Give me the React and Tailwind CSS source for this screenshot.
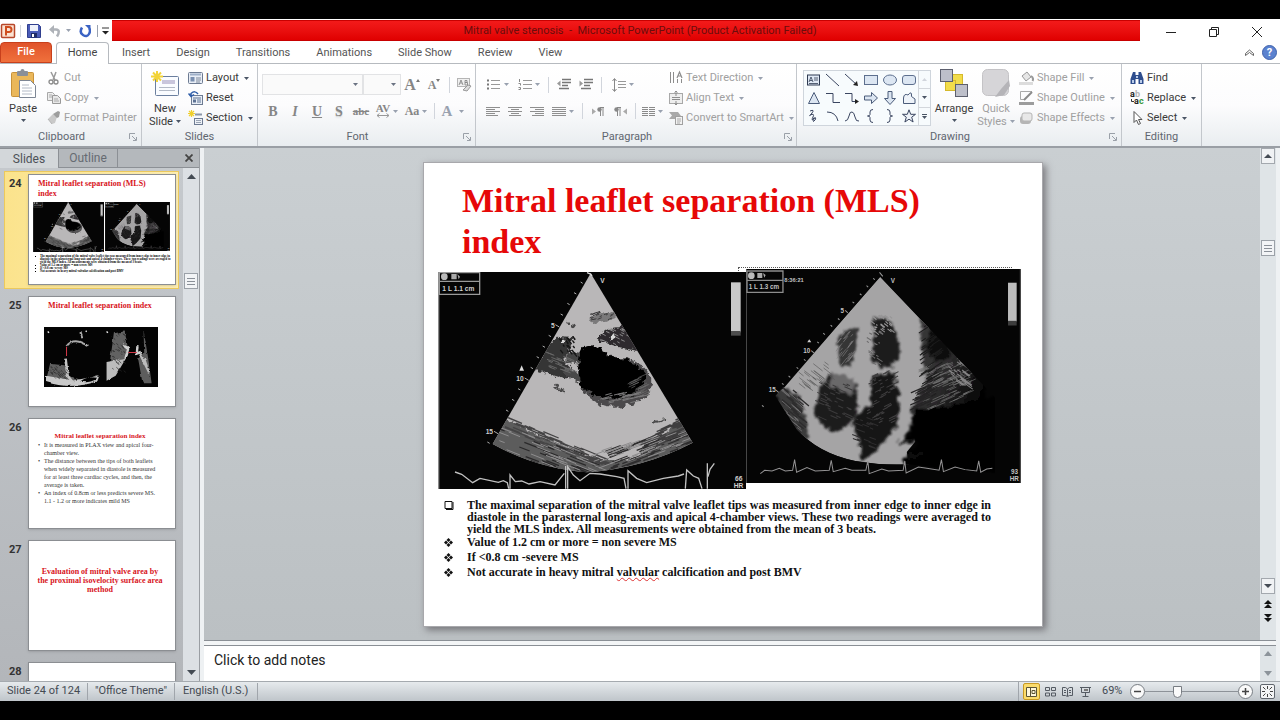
import { useId } from "react";

const UI = "font-['Roboto',sans-serif]";
const SERIF = "font-['Liberation_Serif',serif]";

// small deterministic generator, keeps the speckle the same on every render
function streaks(seed, count, x, y, w, h, dx, dy, slope = 0) {
  let s = seed;
  const next = () => {
    s = (s * 16807) % 2147483647;
    return s / 2147483647;
  };
  let d = "";
  for (let i = 0; i < count; i++) {
    const k = 0.4 + next();
    const px = next() * w;
    d += `M${Math.round(x + px)} ${Math.round(y + next() * h + px * slope)}l${Math.round(dx * k)} ${Math.round(dy * k)}`;
  }
  return d;
}

function Rough({ id, scale = 16, soft = 2 }) {
  return (
    <filter id={id} x="-10%" y="-10%" width="120%" height="120%">
      <feTurbulence type="fractalNoise" baseFrequency="0.06" numOctaves="3" seed="4" />
      <feDisplacementMap in="SourceGraphic" scale={scale} xChannelSelector="R" yChannelSelector="G" />
      <feGaussianBlur stdDeviation={soft} />
    </filter>
  );
}

function LongAxisScan({ className }) {
  const id = useId();
  const wedge = "M482 40L788 548Q640 625 470 637Q320 625 188 552Z";
  return (
    <svg viewBox="24 36 924 651" preserveAspectRatio="none" className={className} role="img" aria-label="Parasternal long-axis view">
      <defs>
        <Rough id={`${id}r`} scale={24} />
        <clipPath id={`${id}c`}>
          <path d={wedge} />
        </clipPath>
      </defs>
      <rect x="24" y="36" width="924" height="651" fill="#050505" />
      <path d="M26 36V687" stroke="#8a8a8a" strokeWidth="4" />
      <path d={wedge} fill="#b9b7b8" />
      <g clipPath={`url(#${id}c)`}>
        <g filter={`url(#${id}r)`}>
          <path d="M215 475L260 488L320 525L400 562L480 592L560 604L620 594L680 540L760 480L830 560L470 680L160 580Z" fill="#5c5b5c" />
          <path d="M380 230L434 235L415 270L400 300L448 355L400 355L300 325Z" fill="#363536" />
          <path d="M408 272L450 278L458 315L410 308Z" fill="#454445" />
          <path d="M400 325L455 338L450 366L420 358Z" fill="#4a494a" />
          <path d="M500 238Q520 202 580 200L640 275Q570 268 500 238Z" fill="#2d2c2d" />
          <path d="M474 172L550 152L566 170L525 186L484 190Z" fill="#7a797a" />
          <path d="M412 188l26 12M370 376l36 18M664 490l44-12" stroke="#4a494a" strokeWidth="6" />
          <path d="M446 294Q450 258 486 256Q516 260 536 290Q615 288 652 332Q678 364 646 412Q606 444 540 440Q482 430 454 384Q438 336 446 294Z" fill="#4b4a4b" />
          <path d="M448 292Q452 258 488 256Q514 262 536 292Q606 294 640 332Q658 370 622 394Q576 424 520 414Q476 406 454 376Q442 334 448 292Z" fill="#060606" />
          <path d="M540 234l16-5M396 240l10 6" stroke="#d8d8d8" strokeWidth="11" />
        </g>
        <g fill="none">
          <path d={streaks(11, 60, 200, 500, 290, 130, 46, 18, 0.3)} stroke="#2b2a2b" strokeWidth="4" />
          <path d={streaks(71, 60, 215, 462, 290, 40, 44, 18, 0.42)} stroke="#454445" strokeWidth="4" />
          <path d={streaks(23, 55, 200, 490, 300, 130, 40, 16, 0.3)} stroke="#8e8d8e" strokeWidth="3" />
          <path d={streaks(37, 60, 500, 580, 270, 60, 42, -16, -0.25)} stroke="#2f2e2f" strokeWidth="4" />
          <path d={streaks(83, 50, 620, 550, 130, 50, 34, -16, -0.6)} stroke="#3f3e3f" strokeWidth="4" />
          <path d={streaks(51, 45, 480, 580, 280, 60, 40, -15, -0.25)} stroke="#8e8d8e" strokeWidth="3" />
          <path d={streaks(7, 24, 590, 350, 50, 60, 26, -12)} stroke="#6d6c6d" strokeWidth="2" />
          <path d={streaks(93, 24, 510, 400, 120, 30, 24, -6)} stroke="#7b7a7b" strokeWidth="3" />
          <path d={streaks(9, 26, 340, 270, 80, 60, 26, 10)} stroke="#666" strokeWidth="3" />
          <path d={streaks(97, 20, 475, 158, 70, 24, 12, -5)} stroke="#3f3e3f" strokeWidth="3" />
          <path d={streaks(101, 22, 510, 200, 80, 50, 12, 6)} stroke="#8b8a8b" strokeWidth="3" />
          <path d={streaks(103, 20, 385, 230, 50, 50, 8, 10)} stroke="#151515" strokeWidth="4" />
        </g>
      </g>
      <path d="M452 66l6 4M432 98l7 4M412 130l7 4M392 162l7 4M376 194l12 7M356 226l7 4M338 258l7 4M320 290l7 4M302 322l7 4M284 354l12 7M264 386l7 4M246 418l7 4M228 450l7 4M192 514l12 7M172 546l7 4" stroke="#b0b0b0" strokeWidth="3" />
      <path d="M471 38l11 4 4 6" stroke="#ddd" strokeWidth="4" fill="none" />
      <path d="M275 316l7 16h-14z" fill="#ddd" />
      <g fill="#d0d0d0" fontFamily="Liberation Sans, sans-serif" fontWeight="bold" fontSize="20">
        <text x="511" y="69">V</text>
        <text x="363" y="203">5</text>
        <text x="259" y="363">10</text>
        <text x="167" y="522">15</text>
        <text x="915" y="664">66</text>
        <text x="911" y="685">HR</text>
        <text x="37" y="93">1 L 1.1 cm</text>
      </g>
      <path d="M28 38H149V103H28ZM28 64H149" fill="none" stroke="#9a9a9a" strokeWidth="4" />
      <circle cx="43" cy="50" r="10" fill="#bbb" />
      <path d="M64 42h16v16h-16zM82 42l8 8-4 8" fill="#aaa" />
      <rect x="903" y="67" width="29" height="150" fill="#c9c9c9" />
      <rect x="903" y="213" width="29" height="14" fill="#4d4d4d" />
      <path d="M75 636L95 643L128 668L150 655L205 667L220 662L232 668L236 686M240 686V645L256 665L275 663L297 672L330 665L375 675L395 650L403 640M407 686V618M413 686V620L430 645L450 662L480 640L510 642L560 650L582 655L588 686M594 686V632L620 655L650 668L700 655L745 648L762 642M766 686L770 630L790 648L806 655L816 686M832 686V610M834 650L840 628L853 610" fill="none" stroke="#c2c2c2" strokeWidth="4" />
    </svg>
  );
}

function FourChamberScan({ className }) {
  const id = useId();
  return (
    <svg viewBox="32 28 826 640" preserveAspectRatio="none" className={className} role="img" aria-label="Apical 4-chamber view">
      <defs>
        <Rough id={`${id}r`} scale={28} soft={3} />
        <linearGradient id={`${id}g`} x1="0" y1="0" x2="1" y2="0.6">
          <stop offset="0" stopColor="#3c3b3c" />
          <stop offset="0.55" stopColor="#2e2d2e" />
          <stop offset="1" stopColor="#050505" />
        </linearGradient>
        <clipPath id={`${id}c`}>
          <path d="M435 52L780 412V640L520 612Q440 616 360 602Q250 580 185 508L120 408Z" />
        </clipPath>
      </defs>
      <rect x="32" y="28" width="826" height="640" fill="#050505" />
      <path d="M33 28V668M856 28V668" stroke="#555" strokeWidth="3" />
      <g clipPath={`url(#${id}c)`}>
        <path d="M435 50L582 204L600 420L540 470L540 545L515 575L522 612Q440 616 360 602Q250 580 185 508L136 395Z" fill="#a5a4a5" />
        <g filter={`url(#${id}r)`}>
          <path d="M556 165L650 240L760 360L740 440L640 490L520 460L575 370L562 290Z" fill={`url(#${id}g)`} />
          <path d="M585 205L645 262L650 290L600 305L572 270Z" fill="#0c0c0c" />
          <path d="M540 445L640 440L800 400L800 640L510 640L500 600L548 552L505 545L525 500Z" fill="#060606" />
          <path d="M312 220L366 204L360 300L346 315L312 318L304 240Z" fill="#353435" />
          <path d="M415 172Q460 166 482 210L494 290L474 316L436 322L408 300L416 230Z" fill="#1d1c1d" />
          <path d="M414 346L474 336L492 400L484 500L434 560L382 606L372 540L350 505L360 462L406 440Z" fill="#151415" />
          <path d="M280 345Q334 335 362 370L368 440L342 495L296 516Q246 494 238 444L256 386Z" fill="#1b1a1b" />
          <path d="M286 344Q334 332 360 368L354 405L284 376Z" fill="#6a696a" />
          <path d="M110 380L185 400L210 460L220 540L160 520Z" fill="#3b3a3b" />
          <path d="M488 552l45-12M520 590l40-10" stroke="#101010" strokeWidth="10" />
        </g>
        <g fill="none">
          <path d={streaks(3, 90, 550, 330, 140, 130, 32, -14, -0.3)} stroke="#767576" strokeWidth="2" />
          <path d={streaks(107, 30, 640, 285, 60, 80, 22, 16, 0.4)} stroke="#858485" strokeWidth="3" />
          <path d={streaks(5, 50, 550, 180, 50, 240, 24, -16)} stroke="#1c1c1c" strokeWidth="3" />
          <path d={streaks(109, 40, 520, 400, 60, 60, 28, -12, -0.4)} stroke="#252425" strokeWidth="3" />
          <path d={streaks(13, 26, 310, 205, 50, 90, -14, 18)} stroke="#7e7d7e" strokeWidth="2" />
          <path d={streaks(17, 34, 405, 165, 60, 50, 10, 8)} stroke="#959495" strokeWidth="3" />
          <path d={streaks(113, 24, 395, 210, 40, 100, 10, 6)} stroke="#6c6b6c" strokeWidth="3" />
          <path d={streaks(19, 50, 395, 340, 75, 150, 16, -8)} stroke="#3e3d3e" strokeWidth="3" />
          <path d={streaks(29, 34, 240, 360, 100, 110, 20, 9)} stroke="#3c3b3c" strokeWidth="3" />
          <path d={streaks(127, 26, 185, 320, 100, 60, 26, 20, -0.2)} stroke="#5b5a5b" strokeWidth="2" />
          <path d={streaks(31, 34, 135, 370, 60, 130, 24, 20, 0.5)} stroke="#2d2c2d" strokeWidth="4" />
          <path d={streaks(131, 24, 130, 380, 60, 90, 24, 20, 0.6)} stroke="#7e7d7e" strokeWidth="2" />
          <path d={streaks(41, 20, 350, 460, 60, 100, 18, 7)} stroke="#2f2e2f" strokeWidth="3" />
        </g>
      </g>
      <path d="M433 38l10 12M414 56l5 4M394 78l5 4M374 102l5 4M352 126l5 4M330 152l8 7M308 176l5 4M286 196l5 4M264 220l5 4M246 246l5 4M228 272l8 7M206 298l5 4M184 322l5 4M160 348l5 4M140 370l5 4M122 390l8 7M80 436l5 4" stroke="#999" strokeWidth="3" />
      <path d="M222 238l6 9h-12z" fill="#ccc" />
      <g fill="#c2c2c2" fontFamily="Liberation Sans, sans-serif" fontWeight="bold" fontSize="19">
        <text x="467" y="69">V</text>
        <text x="316" y="161">5</text>
        <text x="204" y="278">10</text>
        <text x="100" y="397">15</text>
        <text x="828" y="640">93</text>
        <text x="824" y="662">HR</text>
        <text x="40" y="89">1 L 1.3 cm</text>
        <text x="147" y="68" fontSize="17">8:36:21</text>
      </g>
      <path d="M35 34H143V98H35ZM35 62H143" fill="none" stroke="#8d8d8d" strokeWidth="4" />
      <circle cx="48" cy="48" r="10" fill="#bbb" />
      <path d="M66 40h15v15h-15zM83 40l8 6-4 8" fill="#aaa" />
      <rect x="819" y="69" width="26" height="116" fill="#bdbdbd" />
      <rect x="819" y="183" width="26" height="14" fill="#3d3d3d" />
      <path d="M75 640L88 630L110 632L132 624L150 632L172 630L178 598L184 636L215 622L240 632L282 630L288 600L294 634L330 624L350 630L392 630L398 602L402 640L440 626L460 632L504 630L509 602L513 638L550 620L575 624L612 630L619 598L625 634L660 620L690 628L725 632L731 602L737 636L755 626L772 624" fill="none" stroke="#949394" strokeWidth="3" />
    </svg>
  );
}

function LeafletScan({ className }) {
  const id = useId();
  return (
    <svg viewBox="132 547 339 176" preserveAspectRatio="none" className={className} role="img" aria-label="Leaflet separation measurements">
      <defs>
        <Rough id={id} scale={9} soft={1} />
      </defs>
      <rect x="132" y="547" width="339" height="176" fill="#040404" />
      <g filter={`url(#${id})`}>
        <path d="M150 655L196 660L205 690L250 705L298 685L292 705Q220 735 138 705Z" fill="#5e5e5e" />
        <path d="M138 690L200 700L215 705L296 690L290 706Q215 732 138 708Z" fill="#c9c9c9" />
        <path d="M198 605Q212 585 236 590L264 602M246 580L240 562" fill="none" stroke="#a9a9a9" strokeWidth="6" />
        <path d="M196 640L202 690L220 712" stroke="#c4c4c4" strokeWidth="8" fill="none" />
        <path d="M240 706Q262 690 290 696L285 702Q262 714 240 706Z" fill="#040404" />
        <path d="M340 565L372 560L380 600L375 640L328 650Z" fill="#626262" />
        <path d="M318 650L375 640L345 690L318 705Z" fill="#bcbcbc" />
        <path d="M368 600L382 612L374 640M410 600L408 625L420 620" stroke="#d0d0d0" strokeWidth="7" fill="none" />
        <path d="M428 556L442 640L452 712L425 712L412 640L430 620Z" fill="#5d5d5d" />
        <path d="M416 625L444 680L430 640" stroke="#bcbcbc" strokeWidth="6" fill="none" />
      </g>
      <path d={streaks(61, 40, 332, 565, 38, 110, 6, 5)} stroke="#2a2a2a" strokeWidth="2" fill="none" />
      <path d={streaks(67, 34, 148, 660, 50, 35, 6, 5)} stroke="#262626" strokeWidth="2" fill="none" />
      <path d="M199 605V632M383 622H408" stroke="#d43848" strokeWidth="3" />
      <path d="M143 560l4 4M318 560l4 4M256 558l3 3" stroke="#eee" strokeWidth="4" />
    </svg>
  );
}

function Icon({ w = 16, h = 16, children, className = "" }) {
  return (
    <svg width={w} height={h} viewBox={`0 0 ${w} ${h}`} fill="none" className={`shrink-0 ${className}`} aria-hidden="true">
      {children}
    </svg>
  );
}

function Caret({ className = "text-gray-600" }) {
  return (
    <Icon w={5} h={3} className={className}>
      <path d="M0 0h5L2.5 3z" fill="currentColor" />
    </Icon>
  );
}

function Divider() {
  return <span className="mx-1 h-4 w-px shrink-0 bg-gray-300" />;
}

function Group({ label, launcher, width, children }) {
  return (
    <section className={`flex shrink-0 flex-col border-r border-[#c3c7cc] ${width}`}>
      <div className="flex flex-1 pt-1">{children}</div>
      <div className={`relative h-[17px] text-center text-[11px] leading-[16px] text-[#5f6670] ${launcher ? "pr-[18px]" : ""}`}>
        {label}
        {launcher && (
          <button aria-label={`${label} settings`} className="absolute right-1 top-1">
            <Icon w={8} h={8}>
              <path d="M.5 6V.5H6M3 3l4 4M7.500 4v3.500H4" stroke="#9aa0a8" />
            </Icon>
          </button>
        )}
      </div>
    </section>
  );
}

function RowButton({ icon, label, caret, disabled }) {
  return (
    <button disabled={disabled} className={`flex h-5 items-center gap-[3px] whitespace-nowrap ${disabled ? "text-[#a0a0a0]" : "text-[#3a3a3a]"}`}>
      {icon}
      <span>{label}</span>
      {caret && <Caret className={disabled ? "ml-[2px] text-gray-400" : "ml-[2px] text-gray-600"} />}
    </button>
  );
}

function Tool({ label, width = "w-[22px]", caret, children }) {
  return (
    <button aria-label={label} className={`flex h-5 shrink-0 items-center justify-center gap-[3px] text-[#868686] ${width}`}>
      {children}
      {caret && <Caret className="text-gray-400" />}
    </button>
  );
}

const cutIcon = (
  <Icon w={14}>
    <path d="M4 2l4 8M9 2L6 10" stroke="#9a9a9a" strokeWidth="1.500" />
    <circle cx="4" cy="12" r="2" stroke="#8a8a8a" strokeWidth="1.300" />
    <circle cx="9" cy="12" r="2" stroke="#8a8a8a" strokeWidth="1.300" />
  </Icon>
);
const copyIcon = (
  <Icon w={14}>
    <path d="M.5 2.500h5l2 2v6h-7z" fill="#eee" stroke="#a8a8a8" />
    <path d="M5.500 5.500h5l3 3v5h-8z" fill="#e8e8e8" stroke="#999" />
    <path d="M7 9h4M7 11h5M2 5h3M2 7h3" stroke="#aaa" />
  </Icon>
);
const painterIcon = (
  <Icon w={14}>
    <path d="M1 9l5-5 4 3-2 6-3 1z" fill="#c9c9c9" />
    <path d="M6 4l5-3 2 1-1 5-2 1z" fill="#9d9d9d" />
    <path d="M1 9l4 5" stroke="#b5b5b5" />
  </Icon>
);
const layoutIcon = (
  <Icon w={15}>
    <rect x=".5" y="2.500" width="14" height="11" rx="1" fill="#e9eef6" stroke="#6d7b92" />
    <path d="M2 4.500h11" stroke="#9fb0c8" strokeWidth="2" />
    <rect x="2.500" y="7" width="4" height="4.500" fill="#7a8fb0" />
    <path d="M8 8h5M8 10h5M8 12h4" stroke="#7a8698" />
  </Icon>
);
const resetIcon = (
  <Icon w={15}>
    <rect x="3.500" y="5.500" width="11" height="9" fill="#e9eef6" stroke="#6d7b92" />
    <path d="M5 8h8M9 10h4M9 12h4" stroke="#5d7294" />
    <rect x="5" y="9.500" width="3" height="3" fill="#5d7294" />
    <path d="M10 4Q7 0 3 3.500V6M.5 3.500L3 6.500l3-2" stroke="#2d5ca8" strokeWidth="1.500" />
  </Icon>
);
const sectionIcon = (
  <Icon w={15}>
    <path d="M3.500 0v7M0 3.500h7M1 1l5 5M6 1L1 6" stroke="#f0cf2c" strokeWidth="1.200" />
    <path d="M7 4.500h7" stroke="#8b96a8" strokeWidth="2" />
    <rect x="6.500" y="8.500" width="8" height="6" fill="#eef1f6" stroke="#6d7b92" />
    <path d="M8 10.500h5M8 12.500h5" stroke="#9aa5b5" />
  </Icon>
);
const textDirectionIcon = (
  <Icon w={14}>
    <path d="M1.500 2v11M4.500 2v11M8.500 9v4M12.500 9v4" stroke="#8d8d8d" />
    <path d="M8 8l2.500-6L13 8M9 6h3" stroke="#8d8d8d" strokeWidth="1.200" />
  </Icon>
);
const alignTextIcon = (
  <Icon w={14}>
    <rect x=".5" y="3.500" width="13" height="10" fill="#eee" stroke="#a8a8a8" />
    <path d="M3 7.500h8M3 9.500h8M7 1v5M7 11v4M5.500 2.500L7 1l1.500 1.500M5.500 13.500L7 15l1.500-1.500" stroke="#8d8d8d" />
  </Icon>
);
const smartArtIcon = (
  <Icon w={14}>
    <path d="M0 2h9l3 4-3 3H0l3-3.500z" fill="#a9a9a9" />
    <rect x="6.500" y="6.500" width="7" height="8" fill="#f2f2f2" stroke="#a0a0a0" />
    <path d="M8 9h4M8 11h4M8 13h3" stroke="#aaa" />
  </Icon>
);
const fillIcon = (
  <Icon w={15}>
    <path d="M3 6l5-4 4 5-5 4z" fill="#e6e6e6" stroke="#999" />
    <path d="M12 6q3 2 1.500 5" stroke="#999" strokeWidth="2" />
    <path d="M0 13.500h14" stroke="#dcdcdc" strokeWidth="3" />
  </Icon>
);
const outlineIcon = (
  <Icon w={15}>
    <path d="M13 1.500H1.500v8H6" stroke="#aaa" />
    <path d="M5 10l8-8" stroke="#8a8a8a" strokeWidth="2" />
    <path d="M0 13.500h15" stroke="#9c9c9c" strokeWidth="3" />
  </Icon>
);
const effectsIcon = (
  <Icon w={15}>
    <rect x="1" y="6" width="11" height="8" rx="3" fill="#b5b5b5" />
    <rect x="3" y="3" width="10" height="8" rx="2" fill="#e8e8e8" stroke="#b5b5b5" />
  </Icon>
);
const findIcon = (
  <Icon w={14}>
    <path d="M3 2h2.500v3H8.500V2H11l2.500 7v5H8.500V9h-3v5H.5V9z" fill="#2e4d8e" />
    <path d="M2 10h2v3H2zM10 10h2v3h-2zM6 6h2v2H6z" fill="#b9cbe9" />
  </Icon>
);
const replaceIcon = (
  <Icon w={14}>
    <g fontFamily="Roboto, sans-serif" fontSize="9" fontWeight="bold">
      <text x="0" y="7" fill="#222">a</text>
      <text x="5" y="7" fill="#b5b5b5">b</text>
      <text x="4" y="14" fill="#222">a</text>
      <text x="9" y="14" fill="#3a9a3c">c</text>
    </g>
    <path d="M1.500 9v2.500H4" stroke="#333" />
  </Icon>
);
const selectIcon = (
  <Icon w={14}>
    <path d="M4 1.500v11l2.500-2.500 2 4.500 2-1-2-4H12z" fill="#fff" stroke="#555" />
  </Icon>
);

const shapes = [
  <g key="tb">
    <rect x=".5" y="2" width="12" height="10" fill="#dfe8f4" stroke="#2f3b52" />
    <path d="M2 9l2-5 2 5M3 7.500h2M7 5h4M7 7h4M2 10.500h9" stroke="#2f3b52" strokeWidth=".8" />
  </g>,
  <path key="l" d="M0 1l13 12" stroke="#3a4560" />,
  <g key="a">
    <path d="M0 1l12 11" stroke="#3a4560" />
    <path d="M13 13l-5-1 4-4z" fill="#222" />
  </g>,
  <rect key="r" x=".5" y="2.500" width="13" height="9" fill="#dce6f2" stroke="#5d6f8e" />,
  <ellipse key="e" cx="7" cy="7" rx="6.500" ry="5" fill="#dce6f2" stroke="#5d6f8e" />,
  <rect key="rr" x=".5" y="2.500" width="13" height="9" rx="2.500" fill="#dce6f2" stroke="#5d6f8e" />,
  <path key="t" d="M7 1.500L12.500 12.500h-11z" fill="#dce6f2" stroke="#4b5c7a" />,
  <path key="el" d="M0 2.500h7v9h7" stroke="#3a4560" />,
  <g key="ea">
    <path d="M0 2.500h7v8h5" stroke="#3a4560" />
    <path d="M14 10.500l-4-2.500v5z" fill="#222" />
  </g>,
  <path key="ar" d="M.5 5h7V1.500l6 5.500-6 5.500V9h-7z" fill="#dce6f2" stroke="#4b5c7a" />,
  <path key="ad" d="M5 .5v7H1.500l5.500 6 5.500-6H9v-7z" fill="#dce6f2" stroke="#4b5c7a" />,
  <path key="ff" d="M1.500 12.500V7Q2 2 6 4Q10-1 9.500 5.500L13 8v4.500z" fill="#eef3f9" stroke="#4b5c7a" />,
  <path key="sc" d="M3 2q5-2 2 2t-2 2q5-2 3 2t0 2q4-2 2 1t-2 0q0-3 3-2" stroke="#3a4560" />,
  <path key="cv" d="M1 3q9 0 11 9" stroke="#3a4560" />,
  <path key="wv" d="M0 12q3 0 4-5t3-4q2 0 3 5t4 4" stroke="#3a4560" />,
  <path key="lb" d="M9 .5Q6 .5 6 3v2.500Q6 7 3.500 7Q6 7 6 8.500V11q0 2.500 3 2.500" stroke="#3a4560" />,
  <path key="rb" d="M4 .5q3 0 3 2.500v2.500Q7 7 9.500 7Q7 7 7 8.500V11q0 2.500-3 2.500" stroke="#3a4560" />,
  <path key="st" d="M7 .8l1.700 4.500h4.800L9.700 8.200l1.400 4.800L7 10.200 2.900 13l1.400-4.800L.5 5.300h4.800z" fill="#eef3f9" stroke="#3a4560" />,
];

function TitleBar() {
  return (
    <header className="flex h-[23px] shrink-0 bg-white">
      <div className="flex w-28 shrink-0 items-center">
        <Icon w={16}>
          <rect x="1.500" y="1.500" width="13" height="13" rx="1" fill="#fbe3d3" stroke="#b8472a" strokeWidth="1.500" />
          <path d="M6 12.500V4h3a2.500 2.500 0 010 5H6" stroke="#cf4d1e" strokeWidth="2" />
        </Icon>
        <span className="mx-1 h-3 w-px bg-gray-300" />
        <button aria-label="Save" className="ml-[2px]">
          <Icon w={14} h={14}>
            <path d="M.5.5h11l2 2v11H.5z" fill="#4a5cb8" stroke="#303f8e" />
            <rect x="3" y="1" width="8" height="6" fill="#eef1fa" />
            <rect x="4" y="9" width="6" height="4.500" fill="#1f2c66" />
            <rect x="5" y="10" width="2" height="3" fill="#fff" />
          </Icon>
        </button>
        <button aria-label="Undo" className="ml-2 flex items-center gap-[5px]">
          <Icon w={12} h={14}>
            <path d="M3 5.500h4Q12 6 8 12.500" stroke="#aeb2b8" strokeWidth="2.500" />
            <path d="M0 5.500L5 1v9z" fill="#aeb2b8" />
          </Icon>
          <Caret className="text-gray-400" />
        </button>
        <button aria-label="Redo" className="ml-2">
          <Icon w={12} h={14}>
            <path d="M3 3.500q-3 5 1 7.500t6-1 0-6" stroke="#3b63c4" strokeWidth="2.500" />
            <path d="M6 1h5.500v5.500z" fill="#3b63c4" />
          </Icon>
        </button>
        <span className="ml-[6px] h-3 w-px bg-gray-400" />
        <button aria-label="Customize Quick Access Toolbar" className="ml-1">
          <Icon w={7} h={8}>
            <path d="M0 1h7" stroke="#333" />
            <path d="M0 4h7L3.500 7.500z" fill="#222" />
          </Icon>
        </button>
      </div>
      <h1 className="my-px flex-1 border-y border-[#c80000] bg-linear-to-b from-[#f31a1a] to-[#e00000] pl-7 text-center text-[11px] leading-[19px] whitespace-pre text-[#6b0d0d]">
        Mitral valve stenosis  -  Microsoft PowerPoint (Product Activation Failed)
      </h1>
      <div className="flex w-[140px] shrink-0 items-center justify-end pt-[2px] pr-[2px]">
        <button aria-label="Minimize" className="flex w-[43px] justify-center">
          <Icon w={10} h={10}><path d="M0 5.500h10" stroke="#222" /></Icon>
        </button>
        <button aria-label="Restore" className="flex w-[43px] justify-center">
          <Icon w={10} h={10}><path d="M.5 2.500h7v7h-7zM2.500 2V.5h7v7H8" stroke="#222" /></Icon>
        </button>
        <button aria-label="Close" className="flex w-[43px] justify-center">
          <Icon w={10} h={10}><path d="M0 0l10 10M10 0L0 10" stroke="#222" /></Icon>
        </button>
      </div>
    </header>
  );
}

function Tabs() {
  const tabs = ["Insert", "Design", "Transitions", "Animations", "Slide Show", "Review", "View"];
  return (
    <nav className="flex h-[22px] shrink-0 items-end border-b border-[#b6babf] bg-white text-[11px] text-[#555]">
      <button className="h-[21px] w-[52px] rounded-t-sm border border-[#c8401c] bg-linear-to-b from-[#e0532b] to-[#f0713c] font-medium text-white">File</button>
      <button className="-mb-px ml-1 h-[22px] w-[53px] rounded-t-sm border border-b-0 border-[#b6babf] bg-white text-[#444]">Home</button>
      <div className="flex h-[21px] flex-1">
        {tabs.map((t) => (
          <button key={t} className="px-[13px] pt-px">{t}</button>
        ))}
      </div>
      <div className="flex h-full items-center gap-2 pr-[3px]">
        <button aria-label="Minimize the Ribbon">
          <Icon w={9} h={8}><path d="M.5 4.500l4-3.500 4 3.500v2l-4-3-4 3z" stroke="#555" strokeWidth=".9" /></Icon>
        </button>
        <button aria-label="Help" className="flex size-[15px] items-center justify-center rounded-full border border-[#3f62ac] bg-[#5b82cf] text-[11px] font-bold leading-none text-white">?</button>
      </div>
    </nav>
  );
}

function Lines({ widths, align = "start", stroke = "#8f8f8f" }) {
  return (
    <Icon w={14} h={11}>
      {widths.map((w, i) => {
        const x = align === "start" ? 0 : align === "end" ? 14 - w : (14 - w) / 2;
        return <path key={i} d={`M${x} ${i * 2 + 1.5}h${w}`} stroke={stroke} />;
      })}
    </Icon>
  );
}

function FontGroup() {
  return (
    <Group label="Font" launcher width="w-[218px]">
      <div className="flex flex-col pl-1">
        <div className="mt-[6px] flex h-[21px] items-center">
          {[["Font", "w-[101px]"], ["Font size", "w-[38px]"]].map(([name, w]) => (
            <div key={name} className={`relative h-[21px] ${w}`}>
              <select aria-label={name} className="h-full w-full appearance-none border border-[#e2e3e5] bg-[#fafafa]" />
              <Caret className="absolute right-[5px] top-[9px] text-gray-500" />
            </div>
          ))}
          <Tool label="Grow Font"><span className={`${SERIF} text-[16px] font-bold`}>A</span><Icon w={4} h={12} className="-ml-[3px]"><path d="M0 3h4L2 0z" fill="#777" /></Icon></Tool>
          <Tool label="Shrink Font"><span className={`${SERIF} text-[12px] font-bold`}>A</span><Icon w={4} h={12} className="-ml-[3px]"><path d="M0 0h4L2 3z" fill="#777" /></Icon></Tool>
          <Divider />
          <Tool label="Clear Formatting">
            <Icon w={16}>
              <rect x=".5" y="1.500" width="12" height="8" fill="#f0f0f0" stroke="#b5b5b5" />
              <path d="M2 8l2-5 2 5M3 6h2M8 8V3.500h2v2H8h2.500V8z" stroke="#888" strokeWidth=".9" />
              <path d="M6 13l5-5 3 1-4 5z" fill="#ddd" stroke="#999" />
            </Icon>
          </Tool>
        </div>
        <div className={`mt-[6px] flex items-center ${SERIF} text-[14px] font-bold`}>
          <Tool label="Bold">B</Tool>
          <Tool label="Italic"><i>I</i></Tool>
          <Tool label="Underline"><u>U</u></Tool>
          <Tool label="Text Shadow"><span className="text-shadow-sm">S</span></Tool>
          <Tool label="Strikethrough"><s className="text-[11px]">abc</s></Tool>
          <Tool label="Character Spacing" width="w-[30px]" caret>
            <span className="flex flex-col items-center text-[11px] leading-[9px]">
              AV
              <Icon w={14} h={5}><path d="M1 2.500h12M3.500.5L1 2.500l2.500 2M10.500.5L13 2.500l-2.500 2" stroke="#999" /></Icon>
            </span>
          </Tool>
          <Tool label="Change Case" width="w-[28px]" caret><span className="text-[12px]">Aa</span></Tool>
          <Divider />
          <Tool label="Font Color" width="w-[28px]" caret><span className="pr-1 text-[15px] text-gray-400">A</span></Tool>
        </div>
      </div>
    </Group>
  );
}

function ParagraphGroup() {
  return (
    <Group label="Paragraph" launcher width="w-[321px]">
      <div className="flex w-[187px] flex-col pl-[6px]">
        <div className="mt-[6px] flex h-[21px] items-center">
          <Tool label="Bullets" width="w-[31px]" caret>
            <Icon w={14} h={13}><path d="M4 2.500h9M4 6.500h9M4 10.500h9" stroke="#999" /><path d="M0 2.500h2M0 6.500h2M0 10.500h2" stroke="#777" strokeWidth="2" /></Icon>
          </Tool>
          <Tool label="Numbering" width="w-[31px]" caret>
            <Icon w={14} h={13}><path d="M5 2.500h9M5 6.500h9M5 10.500h9" stroke="#999" /><path d="M1.500 1v3M.5 5.500h2v2M.5 9.500h2v2h-2" stroke="#888" /></Icon>
          </Tool>
          <Divider />
          <Tool label="Decrease List Level">
            <Icon w={14} h={13}><path d="M5 1.500h9M5 4.500h9M5 7.500h6M2 10.500h10" stroke="#777" strokeWidth="1.500" /><path d="M0 5.500l3.500-3v6z" fill="#999" /></Icon>
          </Tool>
          <Tool label="Increase List Level">
            <Icon w={14} h={13}><path d="M5 1.500h9M5 4.500h9M5 7.500h6M2 10.500h10" stroke="#777" strokeWidth="1.500" /><path d="M4 5.500l-3.500-3v6z" fill="#999" /></Icon>
          </Tool>
          <Divider />
          <Tool label="Line Spacing" width="w-[34px]" caret>
            <Icon w={14} h={14}><path d="M6 3.500h8M6 6.500h8M6 9.500h8" stroke="#999" /><path d="M2.500 1v12M.5 3l2-2.500 2 2.500M.5 11l2 2.500 2-2.500" stroke="#888" /></Icon>
          </Tool>
        </div>
        <div className="mt-[6px] flex items-center">
          <Tool label="Align Left"><Lines widths={[14, 9, 14, 9, 12]} /></Tool>
          <Tool label="Center"><Lines widths={[14, 8, 14, 8, 12]} align="center" /></Tool>
          <Tool label="Align Right"><Lines widths={[14, 9, 14, 9, 12]} align="end" /></Tool>
          <Tool label="Justify" width="w-[30px]" caret><Lines widths={[14, 14, 14, 14, 14]} /></Tool>
          <Divider />
          <Tool label="Left-to-Right">
            <Icon w={13} h={11}><path d="M0 2.500v6l4-3z" fill="#aaa" /><path d="M12 1.500H8M8.500 1v9M11 1v9" stroke="#888" /><circle cx="7.500" cy="3.500" r="2.200" fill="#888" /></Icon>
          </Tool>
          <Tool label="Right-to-Left">
            <Icon w={13} h={11}><path d="M13 2.500v6l-4-3z" fill="#aaa" /><path d="M7 1.500H3M3.500 1v9M6 1v9" stroke="#888" /><circle cx="2.500" cy="3.500" r="2.200" fill="#888" /></Icon>
          </Tool>
          <Divider />
          <Tool label="Columns" width="w-[24px]" caret>
            <Icon w={13} h={11}><path d="M0 1.500h6M0 3.500h6M0 5.500h6M0 7.500h6M0 9.500h6M7 1.500h6M7 3.500h6M7 5.500h6M7 7.500h6M7 9.500h6" stroke="#8a8a8a" /></Icon>
          </Tool>
        </div>
      </div>
      <div className="flex flex-col pl-[6px]">
        <RowButton icon={textDirectionIcon} label="Text Direction" caret disabled />
        <RowButton icon={alignTextIcon} label="Align Text" caret disabled />
        <RowButton icon={smartArtIcon} label="Convert to SmartArt" caret disabled />
      </div>
    </Group>
  );
}

function DrawingGroup() {
  return (
    <Group label="Drawing" launcher width="w-[325px]">
      <div className="ml-[6px] mt-[2px] flex h-[56px] w-[128px] border border-[#cfd5dc] bg-[#f7fbfd]">
        <div className="grid flex-1 grid-cols-6 place-items-center">
          {shapes.map((s) => (
            <Icon key={s.key} w={14} h={14}>{s}</Icon>
          ))}
        </div>
        <div className="flex w-3 flex-col divide-y divide-[#d3d7dc] border-l border-[#d3d7dc]">
          <button aria-label="Previous shapes" className="flex flex-1 items-center justify-center"><Caret className="rotate-180 text-gray-300" /></button>
          <button aria-label="Next shapes" className="flex flex-1 items-center justify-center"><Caret /></button>
          <button aria-label="More shapes" className="flex flex-1 flex-col items-center justify-center gap-px"><span className="h-px w-[5px] bg-gray-600" /><Caret /></button>
        </div>
      </div>
      <button className="flex w-[46px] flex-col items-center text-[#3a3a3a]">
        <Icon w={28} h={31}>
          <rect x="10.500" y="6.500" width="12" height="12" fill="#f2dc4a" stroke="#d5b92c" />
          <rect x="5.500" y="12.500" width="10" height="10" fill="#f2dc4a" stroke="#d5b92c" />
          <rect x=".5" y="1.500" width="12" height="12" fill="#bdbfca" stroke="#5c5f6e" />
          <rect x="15.500" y="16.500" width="12" height="12" fill="#bdbfca" stroke="#5c5f6e" />
        </Icon>
        <span className="mt-[3px] leading-[14px]">Arrange</span>
        <Caret className="mt-[3px] text-gray-600" />
      </button>
      <button disabled className="flex w-[38px] flex-col items-center text-[#a0a0a0]">
        <Icon w={28} h={31}>
          <rect x=".5" y="1.500" width="26" height="26" rx="5" fill="#d6d5d8" stroke="#c4c3c6" />
          <path d="M27 12l-8 9-6 8 9-2 6-9z" fill="#b5b4b8" />
        </Icon>
        <span className="mt-[3px] leading-[13px]">Quick</span>
        <span className="flex items-center gap-[3px] leading-[13px]">Styles<Caret className="text-gray-400" /></span>
      </button>
      <div className="flex flex-col pl-1">
        <RowButton icon={fillIcon} label="Shape Fill" caret disabled />
        <RowButton icon={outlineIcon} label="Shape Outline" caret disabled />
        <RowButton icon={effectsIcon} label="Shape Effects" caret disabled />
      </div>
    </Group>
  );
}

function Ribbon() {
  return (
    <div className="flex h-[84px] shrink-0 overflow-hidden border-b-2 border-[#9a9fa5] bg-linear-to-b from-white via-[#fcfcfd] to-[#e9edf0] text-[11px]">
      <Group label="Clipboard" launcher width="w-[142px]">
        <button className="ml-[5px] flex w-[36px] flex-col items-center text-[#3a3a3a]">
          <Icon w={26} h={31}>
            <rect x="1.500" y="4.500" width="22" height="24" rx="1" fill="#eab75a" stroke="#c8923a" />
            <rect x="7" y="3" width="11" height="5" rx="1" fill="#8a8f98" />
            <circle cx="12.500" cy="3" r="2" fill="#8a8f98" />
            <path d="M9.500 12.500h11l5 5v12h-16z" fill="#fff" stroke="#7d8694" />
            <path d="M12 17h7M12 20h10M12 23h10M12 26h10" stroke="#b3bac6" />
          </Icon>
          <span className="mt-[3px] leading-[14px]">Paste</span>
          <Caret className="mt-[3px] text-gray-600" />
        </button>
        <div className="flex flex-col pl-[6px]">
          <RowButton icon={cutIcon} label="Cut" disabled />
          <RowButton icon={copyIcon} label="Copy" caret disabled />
          <RowButton icon={painterIcon} label="Format Painter" disabled />
        </div>
      </Group>
      <Group label="Slides" width="w-[116px]">
        <button className="ml-[3px] flex w-[40px] flex-col items-center text-[#3a3a3a]">
          <Icon w={28} h={31}>
            <rect x="4.500" y="8.500" width="23" height="19" rx="1" fill="#fafcff" stroke="#6b7f9e" />
            <path d="M11 12h13v4H11z" fill="#c9c6dc" />
            <path d="M8 19.500h16M8 22.500h16" stroke="#b3bac6" />
            <path d="M6 3v11M0 8.500h12M2 4.500l8 8M10 4.500l-8 8" stroke="#f2d338" strokeWidth="2" />
          </Icon>
          <span className="mt-[3px] leading-[13px]">New</span>
          <span className="flex items-center gap-[3px] leading-[13px]">Slide<Caret /></span>
        </button>
        <div className="flex flex-col pl-[3px]">
          <RowButton icon={layoutIcon} label="Layout" caret />
          <RowButton icon={resetIcon} label="Reset" />
          <RowButton icon={sectionIcon} label="Section" caret />
        </div>
      </Group>
      <FontGroup />
      <ParagraphGroup />
      <DrawingGroup />
      <Group label="Editing" width="w-[80px]">
        <div className="flex flex-col pl-2">
          <RowButton icon={findIcon} label="Find" />
          <RowButton icon={replaceIcon} label="Replace" caret />
          <RowButton icon={selectIcon} label="Select" caret />
        </div>
      </Group>
    </div>
  );
}

function Thumb({ number, selected, children }) {
  return (
    <li className={`ml-1 flex h-[118px] w-[175px] shrink-0 gap-[5px] border pl-1 pt-[2px] ${selected ? "border-[#ecc95c] bg-linear-to-r from-[#fbe38c] to-[#fdeeb4]" : "border-transparent"}`}>
      <span className="w-[14px] pt-[3px] text-[11px] font-bold leading-[14px] text-[#333]">{number}</span>
      <div className={`h-[111px] w-[148px] overflow-hidden border border-[#8b8e92] bg-white shadow-sm ${SERIF}`}>{children}</div>
    </li>
  );
}

function SlidesPane() {
  const tinyBullets = [
    "The maximal separation of the mitral valve leaflet tips was measured from inner edge to inner edge in diastole in the parasternal long-axis and apical 4-chamber views. These two readings were averaged to yield the MLS index. All measurements were obtained from the mean of 3 beats.",
    "Value of 1.2 cm or more = non severe MS",
    "If <0.8 cm -severe MS",
    "Not accurate in heavy mitral valvular calcification and post BMV",
  ];
  const indexBullets = [
    ["It is measured in PLAX view and apical four-", "chamber view."],
    ["The distance between the tips of both leaflets", "when widely separated in diastole is measured", "for at least three cardiac cycles, and then, the", "average is taken."],
    ["An index of 0.8cm or less predicts severe MS.", "1.1 - 1.2 or more indicates mild MS"],
  ];
  return (
    <aside className="flex w-[200px] shrink-0 flex-col border-r border-[#9a9ea3] bg-[#bcc0c5]">
      <div className="flex h-5 shrink-0 border-t border-[#8c9095] text-[12px] text-[#4c5158]">
        <button className="w-[58px] bg-[#d3d7da]">Slides</button>
        <button className="w-[60px] border-x border-b border-[#8c9095] bg-[#b4b8bc] text-[#666b72]">Outline</button>
        <div className="flex flex-1 items-center justify-end border-b border-[#8c9095] bg-[#b4b8bc] pr-[6px]">
          <button aria-label="Close pane"><Icon w={8} h={8}><path d="M.5.5l7 7M7.500.5l-7 7" stroke="#444" strokeWidth="1.800" /></Icon></button>
        </div>
      </div>
      <div className="flex min-h-0 flex-1">
        <ul className="flex min-w-0 flex-1 flex-col gap-1 overflow-hidden bg-linear-to-b from-[#c5c9cd] to-[#b3b6ba] pt-[3px]">
          <Thumb number="24" selected>
            <h3 className="pl-[9px] pt-1 text-[8px] font-bold leading-[10px] text-[#d8141c]">
              Mitral leaflet separation (MLS)
              <br />
              index
            </h3>
            <div className="mt-[3px] flex gap-px pl-1">
              <LongAxisScan className="h-[50px] w-[71px]" />
              <FourChamberScan className="h-[49px] w-[65px]" />
            </div>
            <ul className="mt-[3px] pl-[6px] pr-1 text-[3px] font-bold leading-[3px] text-black">
              {tinyBullets.map((t) => (
                <li key={t} className="flex items-start gap-1">
                  <span className="mt-px size-px shrink-0 bg-black" />
                  <p>{t}</p>
                </li>
              ))}
            </ul>
          </Thumb>
          <Thumb number="25">
            <h3 className="pt-1 pr-1 text-center text-[8px] font-bold leading-[10px] text-[#d8141c]">Mitral leaflet separation index</h3>
            <LeafletScan className="ml-[15px] mt-4 h-[60px] w-[114px]" />
          </Thumb>
          <Thumb number="26">
            <h3 className="pt-[13px] pr-1 text-center text-[7px] font-bold leading-[9px] text-[#d8141c]">Mitral leaflet separation index</h3>
            <ul className="pl-[9px] text-[6px] leading-[8px] whitespace-nowrap text-[#333]">
              {indexBullets.map((lines) => (
                <li key={lines[0]} className="flex">
                  <span className="w-[6px] shrink-0">•</span>
                  <p>
                    {lines.map((line) => (
                      <span key={line} className="block">{line}</span>
                    ))}
                  </p>
                </li>
              ))}
            </ul>
          </Thumb>
          <Thumb number="27">
            <h3 className="pt-[26px] pr-1 text-center text-[8px] font-bold leading-[9px] text-[#d8141c]">
              Evaluation of mitral valve area by
              <br />
              the proximal isovelocity surface area
              <br />
              method
            </h3>
          </Thumb>
          <Thumb number="28" />
        </ul>
        <div className="flex w-4 shrink-0 flex-col items-center bg-[#dce0e4] pt-[6px] pb-[6px]">
          <button aria-label="Scroll up"><Icon w={9} h={5}><path d="M0 5h9L4.500 0z" fill="#444b54" /></Icon></button>
          <div className="basis-[94px]" />
          <ScrollThumb />
          <div className="flex-1" />
          <button aria-label="Scroll down"><Icon w={9} h={5}><path d="M0 0h9L4.500 5z" fill="#444b54" /></Icon></button>
        </div>
      </div>
    </aside>
  );
}

function ScrollThumb() {
  return (
    <div className="flex h-4 w-[14px] shrink-0 flex-col items-center justify-center gap-[2px] border border-[#9ba1a8] bg-[#f2f4f6]">
      <span className="h-px w-2 bg-[#8a9098]" />
      <span className="h-px w-2 bg-[#8a9098]" />
      <span className="h-px w-2 bg-[#8a9098]" />
    </div>
  );
}

function Slide() {
  return (
    <article className={`h-[465px] w-[620px] shrink-0 border border-[#a8a8ac] bg-white shadow-[3px_3px_7px_rgba(60,55,60,0.55)] ${SERIF} font-bold`}>
      <h2 className="pl-[38px] pt-[17px] text-[34px] leading-[41px] text-[#e60808]">
        Mitral leaflet separation (MLS)
        <br />
        index
      </h2>
      <div className="relative mt-[7px] flex items-start pl-[14px]">
        <LongAxisScan className="mt-[3px] h-[217px] w-[308px]" />
        <FourChamberScan className="h-[214px] w-[275px]" />
        <div className="absolute -top-[2px] left-[314px] h-1 w-[274px] border-l border-t border-dotted border-[#555]" />
      </div>
      <ul className="mt-[10px] ml-5 w-[547px] text-[12px] leading-[15px] text-[#111]">
        <li className="flex leading-[12px]">
          <span className="w-[23px] shrink-0">
            <Icon w={10} h={11}><path d="M1 2.500h7v7H1z" stroke="#111" /><path d="M9 3v7.500H2" stroke="#111" /></Icon>
          </span>
          <p className="flex-1">
            <span className="block [text-align-last:justify]">The maximal separation of the mitral valve leaflet tips was measured from inner edge to inner edge in</span>
            <span className="block [text-align-last:justify]">diastole in the parasternal long-axis and apical 4-chamber views. These two readings were averaged to</span>
            <span className="block">yield the MLS index. All measurements were obtained from the mean of 3 beats.</span>
          </p>
        </li>
        {[
          "Value of 1.2 cm or more = non severe MS",
          "If <0.8 cm -severe MS",
          <>Not accurate in heavy mitral <span className="underline decoration-[#d33] decoration-wavy decoration-1 underline-offset-1">valvular</span> calcification and post BMV</>,
        ].map((text, i) => (
          <li key={i} className="flex items-center">
            <span className="w-[23px] shrink-0">
              <Icon w={9} h={9}><path d="M4.500 0l2 2-2 2-2-2zM4.500 5l2 2-2 2-2-2zM2 2.500l2 2-2 2-2-2zM7 2.500l2 2-2 2-2-2z" fill="#111" /></Icon>
            </span>
            <p>{text}</p>
          </li>
        ))}
      </ul>
    </article>
  );
}

function ArrowBox({ label, up }) {
  return (
    <button aria-label={label} className="flex h-4 w-[14px] shrink-0 items-center justify-center border border-[#a3a8ae] bg-[#f0f2f4]">
      <Icon w={8} h={4} className={up ? "" : "rotate-180"}><path d="M0 4h8L4 0z" fill="#444b54" /></Icon>
    </button>
  );
}

function Editor() {
  return (
    <main className="ml-1 flex min-w-0 flex-1 flex-col pr-1">
      <div className="flex min-h-0 flex-1">
        <div className="flex min-w-0 flex-1 items-center justify-center overflow-hidden bg-linear-to-b from-[#cacfd2] to-[#bbc0c3] pl-[2px]">
          <Slide />
        </div>
        <div className="flex w-4 shrink-0 flex-col items-center bg-[#dfe4e7]">
          <ArrowBox label="Scroll up" up />
          <div className="basis-[76px]" />
          <ScrollThumb />
          <div className="flex-1" />
          <ArrowBox label="Scroll down" />
          <button aria-label="Previous slide" className="mt-[6px]"><Icon w={8} h={8}><path d="M4 0l4 4H0zM4 4l4 4H0z" fill="#111" /></Icon></button>
          <button aria-label="Next slide" className="mt-[6px] mb-[18px]"><Icon w={8} h={8}><path d="M4 4l4-4H0zM4 8l4-4H0z" fill="#111" /></Icon></button>
        </div>
      </div>
      <div className="h-[6px] shrink-0 border-y border-[#8a8f95] bg-[#f3f5f6]" />
      <div className="flex h-[35px] shrink-0 bg-white">
        <input aria-label="Notes" placeholder="Click to add notes" className={`min-w-0 flex-1 self-start border-0 px-[10px] pt-[5px] text-[14px] leading-[18px] text-[#222] placeholder:text-[#222] ${UI}`} />
        <div className="flex w-4 shrink-0 flex-col items-center justify-between bg-[#dfe4e7] py-[5px]">
          <Icon w={8} h={5}><path d="M0 5h8L4 0z" fill="#8d949b" /></Icon>
          <Icon w={8} h={5}><path d="M0 0h8L4 5z" fill="#8d949b" /></Icon>
        </div>
      </div>
    </main>
  );
}

function ZoomButton({ label, plus }) {
  return (
    <button aria-label={label} className="flex size-[15px] shrink-0 items-center justify-center rounded-full border border-[#777c82] bg-[#fafafa]">
      <Icon w={9} h={9}><path d={plus ? "M1 4.500h7M4.500 1v7" : "M1 4.500h7"} stroke="#444" strokeWidth="1.500" /></Icon>
    </button>
  );
}

function StatusBar() {
  return (
    <footer className="flex h-5 shrink-0 items-center border-t border-[#a5aaaf] bg-linear-to-b from-[#e6eaed] to-[#bfc5ca] text-[11px] whitespace-nowrap text-[#444a52]">
      <span className="w-[88px] border-r border-[#a0a5ab] pl-[7px]">Slide 24 of 124</span>
      <span className="w-[87px] border-r border-[#a0a5ab] pl-[7px]">"Office Theme"</span>
      <span className="w-[83px] border-r border-[#a0a5ab] pl-2">English (U.S.)</span>
      <div className="ml-auto flex h-full items-center border-l border-[#a0a5ab] pl-1 pr-[5px]">
        <button aria-label="Normal" className="mr-[2px] flex h-[17px] w-[17px] items-center justify-center rounded-xs border border-[#c99a24] bg-[#fbdc6c]">
          <Icon w={11} h={10}><path d="M.5.500h10v9H.5zM4.500.5v9M6 3.500h3v3H6z" fill="#fff8dc" stroke="#5b5434" /></Icon>
        </button>
        <button aria-label="Slide Sorter" className="flex w-[17px] justify-center">
          <Icon w={11} h={10}><path d="M.5.500h4v3h-4zM6.500.5h4v3h-4zM.5 6h4v3h-4zM6.500 6h4v3h-4z" stroke="#555b63" /></Icon>
        </button>
        <button aria-label="Reading View" className="flex w-[17px] justify-center">
          <Icon w={11} h={10}><path d="M.5.500h3l2 1.500 2-1.500h3v8h-3l-2 1-2-1h-3zM5.500 2v7M2 3.500h2M2 5.500h2M7 3.500h2M7 5.500h2" stroke="#555b63" /></Icon>
        </button>
        <button aria-label="Slide Show" className="flex w-[18px] justify-center">
          <Icon w={11} h={10}><path d="M0 .5h11M1.500 1v4.500h8V1M5.500 6v3M2.500 9.500h6" stroke="#555b63" /><path d="M4 2h4v2H4z" fill="#777" /></Icon>
        </button>
        <button className="ml-2 w-7 text-left">69%</button>
        <ZoomButton label="Zoom out" />
        <input
          type="range"
          aria-label="Zoom"
          min="0"
          max="100"
          defaultValue="33"
          className="h-4 w-[93px] appearance-none bg-[linear-gradient(#8d9298,#8d9298)] bg-[length:100%_1px] bg-center bg-no-repeat [&::-webkit-slider-thumb]:h-[12px] [&::-webkit-slider-thumb]:w-[9px] [&::-webkit-slider-thumb]:appearance-none [&::-webkit-slider-thumb]:rounded-b-full [&::-webkit-slider-thumb]:border [&::-webkit-slider-thumb]:border-[#777c82] [&::-webkit-slider-thumb]:bg-[#fafafa]"
        />
        <ZoomButton label="Zoom in" plus />
        <button aria-label="Fit slide to window" className="ml-[7px]">
          <Icon w={15} h={15}>
            <rect x=".5" y=".5" width="14" height="14" rx="1.500" fill="#f4f5f6" stroke="#60666e" />
            <path d="M7.500 2v3M7.500 10v3M2 7.500h3M10 7.500h3M3 3l2.500 2.500M12 3L9.500 5.500M3 12l2.500-2.500M12 12L9.500 9.500" stroke="#444" />
          </Icon>
        </button>
      </div>
    </footer>
  );
}

export default function App() {
  return (
    <div className={`flex h-screen flex-col overflow-hidden bg-black py-[19px] ${UI}`}>
      <TitleBar />
      <Tabs />
      <Ribbon />
      <div className="flex min-h-0 flex-1 bg-[#eef1f3]">
        <SlidesPane />
        <Editor />
      </div>
      <StatusBar />
    </div>
  );
}
